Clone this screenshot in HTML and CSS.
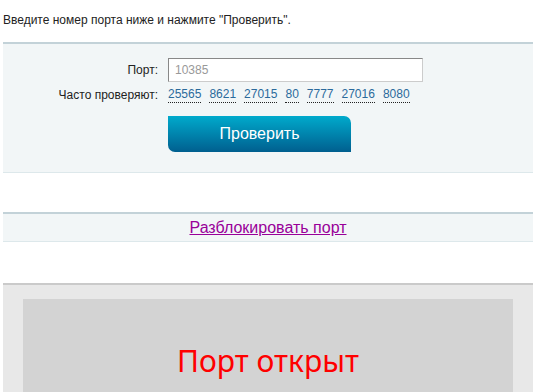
FILE: index.html
```html
<!DOCTYPE html>
<html lang="ru">
<head>
  <meta charset="UTF-8">
  <title>Проверка порта</title>
  <link rel="stylesheet" href="styles.css">
</head>
<body>

  <div class="page">
    <p class="intro">Введите номер порта ниже и нажмите "Проверить".</p>

    <!-- Check form -->
    <div class="check-box">
      <div class="row">
        <label class="row-label" for="port">Порт:</label>
        <input type="text" id="port" class="port-input" value="10385">
      </div>
      <div class="row">
        <span class="row-label">Часто проверяют:</span>
        <div class="popular">
          <a href="#">25565</a>
          <a href="#">8621</a>
          <a href="#">27015</a>
          <a href="#">80</a>
          <a href="#">7777</a>
          <a href="#">27016</a>
          <a href="#">8080</a>
        </div>
      </div>
      <div class="row">
        <span class="row-label"></span>
        <button type="button" class="check-btn">Проверить</button>
      </div>
    </div>

    <div class="unblock-box">
      <a href="#" class="unblock-link">Разблокировать порт</a>
    </div>

    <!-- Result -->
    <div class="result-box">
      <div class="result-inner">
        <span class="result-text">Порт открыт</span>
      </div>
    </div>
  </div>

</body>
</html>
```

FILE: styles.css
```css
body {
  margin: 0;
  font-family: 'Liberation Sans', Arial, sans-serif;
  font-size: 12px;
  color: #222;
  background: #fff;
}

.page {
  padding: 0 3px;
}

.intro {
  margin: 0;
  padding-top: 13px;
  line-height: 15px;
  height: 29px;
}

.check-box {
  width: 530px;
  box-sizing: border-box;
  background-color: #f2f6f7;
  border-top: 2px solid #c3d2d8;
  border-bottom: 1px solid #dde8eb;
  padding: 14px 0 20px;
}

.row {
  display: flex;
  align-items: center;
  gap: 10px;
}

.row + .row {
  margin-top: 4px;
}

.row:last-child {
  margin-top: 13px;
}

.row-label {
  width: 155px;
  text-align: right;
  color: #222;
}

.port-input {
  width: 255px;
  height: 24px;
  box-sizing: border-box;
  margin: 0;
  padding: 2px 6px;
  font-family: 'Liberation Sans', Arial, sans-serif;
  font-size: 12px;
  color: #999;
  background: #fff;
  border: 1px solid #ccc;
  border-top-color: #888;
  border-left-color: #888;
  outline: none;
}

.popular {
  display: flex;
  gap: 8px;
  line-height: 16px;
}

.popular a {
  color: #2b6a9c;
  text-decoration: none;
  border-bottom: 1px dotted #222;
}

.check-btn {
  width: 183px;
  height: 36px;
  border: none;
  border-radius: 0 7px 0 7px;
  background: linear-gradient(#00aacc, #005f8f);
  color: #fff;
  font-family: 'Liberation Sans', Arial, sans-serif;
  font-size: 16px;
  cursor: pointer;
}

.unblock-box {
  width: 530px;
  box-sizing: border-box;
  margin-top: 39px;
  background-color: #f2f6f7;
  border-top: 2px solid #c3d2d8;
  border-bottom: 1px solid #dde8eb;
  height: 30px;
  display: flex;
  align-items: center;
  justify-content: center;
}

.unblock-link {
  color: #990099;
  font-size: 16px;
  text-decoration: underline;
}

.result-box {
  width: 530px;
  box-sizing: border-box;
  margin-top: 41px;
  background-color: #e8e8e8;
  border-top: 2px solid #cacaca;
  padding: 14px 20px 0;
}

.result-inner {
  background-color: #d3d3d3;
  height: 120px;
  display: flex;
  justify-content: center;
  padding-top: 42px;
  box-sizing: border-box;
}

.result-text {
  font-family: 'Noto Sans', 'Open Sans', sans-serif;
  font-size: 30px;
  color: #ff0000;
  line-height: 40px;
}
```
